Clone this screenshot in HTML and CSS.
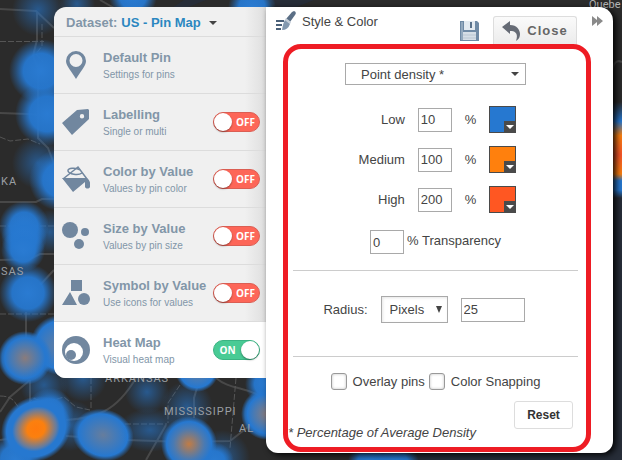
FILE: index.html
```
<!DOCTYPE html>
<html lang="en">
<head>
  <meta charset="UTF-8">
  <meta name="viewport" content="width=device-width, initial-scale=1.0">
  <title>Pin Map - Style &amp; Color</title>
  <link rel="stylesheet" href="styles.css">
</head>
<body>
  <!-- Map behind the panels -->
  <svg class="map" viewBox="0 0 622 460" preserveAspectRatio="xMinYMin slice" aria-hidden="true">
    <defs>
      <radialGradient id="cool">
        <stop offset="0" stop-color="#2a7bd2"/>
        <stop offset="0.55" stop-color="#2678d0" stop-opacity="0.95"/>
        <stop offset="0.8" stop-color="#2678d0" stop-opacity="0.4"/>
        <stop offset="1" stop-color="#2678d0" stop-opacity="0"/>
      </radialGradient>
      <radialGradient id="faint">
        <stop offset="0" stop-color="#2678d0" stop-opacity="0.6"/>
        <stop offset="1" stop-color="#2678d0" stop-opacity="0"/>
      </radialGradient>
      <radialGradient id="warm">
        <stop offset="0" stop-color="#8a7c7c"/>
        <stop offset="0.5" stop-color="#4a7ab2"/>
        <stop offset="0.75" stop-color="#2678d0"/>
        <stop offset="0.85" stop-color="#2678d0" stop-opacity="0.8"/>
        <stop offset="1" stop-color="#2678d0" stop-opacity="0"/>
      </radialGradient>
      <radialGradient id="mild">
        <stop offset="0" stop-color="#667d9d"/>
        <stop offset="0.8" stop-color="#2678d0"/>
        <stop offset="1" stop-color="#2678d0" stop-opacity="0"/>
      </radialGradient>
      <radialGradient id="brown">
        <stop offset="0" stop-color="#c17c45"/>
        <stop offset="0.55" stop-color="#4a7ab2"/>
        <stop offset="0.8" stop-color="#2678d0"/>
        <stop offset="1" stop-color="#2678d0" stop-opacity="0"/>
      </radialGradient>
      <radialGradient id="hot">
        <stop offset="0" stop-color="#ff7a0c"/>
        <stop offset="0.25" stop-color="#fb800f"/>
        <stop offset="0.58" stop-color="#647ca0"/>
        <stop offset="0.68" stop-color="#2678d0"/>
        <stop offset="0.84" stop-color="#2678d0"/>
        <stop offset="1" stop-color="#2678d0" stop-opacity="0"/>
      </radialGradient>
      <linearGradient id="coast" x1="0" y1="0" x2="0" y2="1">
        <stop offset="0" stop-color="#2678d0" stop-opacity="0"/>
        <stop offset="0.2" stop-color="#2678d0"/>
        <stop offset="0.35" stop-color="#fb800f"/>
        <stop offset="0.55" stop-color="#f8562a"/>
        <stop offset="0.75" stop-color="#fb800f"/>
        <stop offset="0.82" stop-color="#2678d0"/>
        <stop offset="0.92" stop-color="#2678d0"/>
        <stop offset="1" stop-color="#2678d0" stop-opacity="0"/>
      </linearGradient>
    </defs>

    <rect width="622" height="460" fill="#2b2b2b"/>
    <path d="M270 0h44l-20 8h-18zM184 0h22l-20 8h-14zM600 192h22v268H360l80-8h160z" fill="#272d38"/>

    <g class="roads">
      <path d="M0 9l36 2 18 17M0 113l28 1 12 1M0 202h36l6-3h12M0 260l30-1 10-5h14M37 12v28l-4 16 5 12v70l10 10 6 16M26 312v36M30 380v28M0 412l10-15 20-17M0 440l30-4M54 270l-14 15"/>
      <path d="M66 420c30-2 50-8 70-42M66 436l60 4 60 2 44-1 36-28M200 378l-6 20 0 20M216 378c14 12 30 8 50 21M100 0l14 8M166 425l-20 35M622 62q-8-4-10 10"/>
    </g>
    <g class="borders">
      <path d="M0 41.500h44M42 24v22l-6 8 7 8M0 226h54M0 314h54M0 137l10 4 18-2 12 5M0 396q12 0 16 8t18-6q8 6 30-1l12 10 14 3M91 378v30M125 424h42M236 378l-6 70M180 385l-12 18v20"/>
    </g>

    <g>
      <circle cx="38" cy="10" r="26" fill="url(#faint)"/>
      <circle cx="133" cy="-4" r="24" fill="url(#cool)"/>
      <circle cx="77" cy="4" r="18" fill="url(#faint)"/>
      <circle cx="252" cy="8" r="24" fill="url(#cool)"/>
      <circle cx="41" cy="71" r="32" fill="url(#cool)"/>
      <circle cx="47" cy="114" r="32" fill="url(#cool)"/>
      <circle cx="38" cy="163" r="26" fill="url(#faint)"/>
      <circle cx="60" cy="180" r="31" fill="url(#cool)"/>
      <circle cx="50" cy="232" r="22" fill="url(#faint)"/>
      <circle cx="24" cy="226" r="25" fill="url(#cool)"/>
      <circle cx="24" cy="238" r="23" fill="url(#cool)"/>
      <circle cx="23" cy="250" r="22" fill="url(#cool)"/>
      <circle cx="28" cy="293" r="29" fill="url(#cool)"/>
      <circle cx="60" cy="345" r="30" fill="url(#mild)"/>
      <circle cx="25" cy="358" r="27" fill="url(#warm)"/>
      <circle cx="44" cy="385" r="24" fill="url(#faint)"/>
      <circle cx="83" cy="378" r="24" fill="url(#faint)"/>
      <circle cx="70" cy="425" r="26" fill="url(#faint)"/>
      <circle cx="15" cy="460" r="26" fill="url(#cool)"/>
      <circle cx="50" cy="412" r="24" fill="url(#cool)"/>
      <ellipse cx="36" cy="429" rx="36" ry="32" transform="rotate(-30 36 429)" fill="url(#hot)"/>
      <ellipse cx="103" cy="435" rx="31" ry="26" transform="rotate(15 103 435)" fill="url(#mild)"/>
      <circle cx="147" cy="392" r="22" fill="url(#faint)"/>
      <ellipse cx="150" cy="430" rx="32" ry="22" fill="url(#faint)"/>
      <circle cx="187" cy="407" r="26" fill="url(#faint)"/>
      <circle cx="197" cy="370" r="22" fill="url(#mild)"/>
      <circle cx="222" cy="458" r="28" fill="url(#faint)"/>
      <circle cx="214" cy="462" r="20" fill="url(#cool)"/>
      <circle cx="189" cy="444" r="28" fill="url(#brown)"/>
      <circle cx="266" cy="384" r="21" fill="url(#cool)"/>
      <circle cx="267" cy="414" r="26" fill="url(#warm)"/>
      <circle cx="370" cy="462" r="22" fill="url(#cool)"/>
      <circle cx="395" cy="464" r="24" fill="url(#cool)"/>
      <rect x="611" y="102" width="14" height="96" fill="url(#coast)"/>
    </g>

    <g class="places">
      <text x="1" y="185">KA</text>
      <text x="1" y="275">SAS</text>
      <text x="105" y="382">ARKANSAS</text>
      <text x="164" y="415">MISSISSIPPI</text>
      <text x="239" y="432">AL</text>
    </g>
    <text class="city" x="589" y="8">Quebe</text>
  </svg>

  <div class="app">
    <nav class="sidebar">
      <button class="dataset" type="button">
        Dataset: <span>US - Pin Map</span>
        <svg width="8" height="4" viewBox="0 0 8 4"><path d="M0 0h8L4 4z" fill="#444"/></svg>
      </button>

      <div class="layer">
        <svg class="layer-icon" viewBox="0 0 28 28">
          <path fill-rule="evenodd" d="M14 0a10 10 0 0 1 10 10c0 5-6 11-10 18C10 21 4 15 4 10A10 10 0 0 1 14 0zm0 3a6.500 6.500 0 1 0 0 13 6.500 6.500 0 0 0 0-13z"/>
        </svg>
        <div class="layer-text">
          <h3>Default Pin</h3>
          <p>Settings for pins</p>
        </div>
      </div>

      <div class="layer">
        <svg class="layer-icon" viewBox="0 0 28 28">
          <path fill-rule="evenodd" d="M0 15L15 2l11-1 1 1v9L10 27zM20 6a2.200 2.200 0 1 0 0 4.400A2.200 2.200 0 0 0 20 6z"/>
        </svg>
        <div class="layer-text">
          <h3>Labelling</h3>
          <p>Single or multi</p>
        </div>
        <label class="switch"><input type="checkbox" aria-label="Labelling"><span>OFF</span></label>
      </div>

      <div class="layer">
        <svg class="layer-icon" viewBox="0 0 28 28">
          <path d="M1 14L16 2l9 12" fill="none" stroke="#71879f" stroke-width="1.500"/>
          <path d="M20 8c-4 3-13 1-14-2s8-4 12-1" fill="none" stroke="#71879f" stroke-width="1.500"/>
          <path d="M0 13h25c3 2 4 7 3 9s-4 2-5 0v-5L11 27z"/>
        </svg>
        <div class="layer-text">
          <h3>Color by Value</h3>
          <p>Values by pin color</p>
        </div>
        <label class="switch"><input type="checkbox" aria-label="Color by Value"><span>OFF</span></label>
      </div>

      <div class="layer">
        <svg class="layer-icon" viewBox="0 0 28 28">
          <circle cx="8" cy="8" r="8"/>
          <circle cx="23" cy="10" r="4"/>
          <circle cx="17" cy="22" r="5"/>
        </svg>
        <div class="layer-text">
          <h3>Size by Value</h3>
          <p>Values by pin size</p>
        </div>
        <label class="switch"><input type="checkbox" aria-label="Size by Value"><span>OFF</span></label>
      </div>

      <div class="layer">
        <svg class="layer-icon" viewBox="0 0 28 28">
          <path d="M9 1h11v11H9zM0 26l8-13 7 13z"/>
          <circle cx="22" cy="20" r="6"/>
        </svg>
        <div class="layer-text">
          <h3>Symbol by Value</h3>
          <p>Use icons for values</p>
        </div>
        <label class="switch"><input type="checkbox" aria-label="Symbol by Value"><span>OFF</span></label>
      </div>

      <div class="layer active">
        <svg class="layer-icon" viewBox="0 0 28 28">
          <circle cx="14" cy="14" r="14"/>
          <circle cx="12" cy="16" r="9" fill="#fff"/>
          <circle cx="9" cy="19" r="5"/>
        </svg>
        <div class="layer-text">
          <h3>Heat Map</h3>
          <p>Visual heat map</p>
        </div>
        <label class="switch"><input type="checkbox" aria-label="Heat Map" checked><span>ON</span></label>
      </div>
    </nav>

    <main class="panel">
      <header class="panel-header">
        <svg class="brush" width="20" height="20" viewBox="0 0 20 20">
          <path d="M0 10h8M0 14h6M0 18h5" stroke="#4a6078" stroke-width="2"/>
          <path d="M18 0q3 1 1 4l-5 7-4-3 6-7z" fill="#5b6f86"/>
          <path d="M10 7l5 4-1 2-5-4z" fill="#c3ccd6"/>
          <path d="M9 9l5 4q-2 6-8 6 1-7 3-10z" fill="#8398ae"/>
        </svg>
        <h2>Style &amp; Color</h2>
        <button class="icon-button save" type="button" aria-label="Save">
          <svg width="19" height="21" viewBox="0 0 19 21">
            <path d="M0 1h17l2 2v18H0z" fill="#6f8aa5"/>
            <path d="M1 2h2v18H1z" fill="#93a9be"/>
            <path d="M4 1h11v9H4z" fill="#e4ebf1"/>
            <path d="M10 2h2v6h-2z" fill="#5a728b"/>
            <path d="M3 12h13v8H3z" fill="#d5dee6"/>
            <path d="M3 15h13M3 18h13" stroke="#b9c6d2"/>
          </svg>
        </button>
        <button class="close" type="button">
          <svg width="18" height="20" viewBox="0 0 18 20">
            <path d="M0 6l8-6v4c7 0 10 5 10 9 0 3-1 5-4 7 2-6 1-10-6-10v3z" fill="#666b75"/>
          </svg>
          Close
        </button>
        <button class="icon-button collapse" type="button" aria-label="Collapse">
          <svg width="11" height="10" viewBox="0 0 11 10"><path d="M0 0l5 4V0l6 5-6 5V6l-5 4z" fill="#8a8a8a"/></svg>
        </button>
      </header>

      <form class="settings">
        <div class="fields">
          <div class="select density">
            <select aria-label="Heat map type">
              <option>Point density *</option>
            </select>
          </div>

          <div class="levels">
            <label for="low">Low</label>
            <input type="text" id="low" value="10">
            <span>%</span>
            <button class="swatch low" type="button" aria-label="Low color"></button>

            <label for="medium">Medium</label>
            <input type="text" id="medium" value="100">
            <span>%</span>
            <button class="swatch medium" type="button" aria-label="Medium color"></button>

            <label for="high">High</label>
            <input type="text" id="high" value="200">
            <span>%</span>
            <button class="swatch high" type="button" aria-label="High color"></button>
          </div>

          <div class="transparency">
            <input type="text" id="transparency" value="0">
            <label for="transparency">% Transparency</label>
          </div>

          <div class="radius">
            <label for="radius">Radius:</label>
            <div class="select unit">
              <select aria-label="Radius unit">
                <option>Pixels</option>
              </select>
            </div>
            <input type="text" id="radius" value="25">
          </div>

          <div class="checks">
            <label><input type="checkbox">Overlay pins</label>
            <label><input type="checkbox">Color Snapping</label>
          </div>
        </div>

        <footer class="settings-footer">
          <p>* Percentage of Average Density</p>
          <button class="reset" type="reset">Reset</button>
        </footer>
      </form>
    </main>
  </div>
</body>
</html>
```
FILE: styles.css
```
* {
  margin: 0;
  padding: 0;
  box-sizing: border-box;
}

body {
  position: relative;
  min-height: 100vh;
  overflow: hidden;
  background: #2b2b2b;
  font-family: "Liberation Sans", Arial, sans-serif;
  font-size: 13px;
  color: #444;
}

button,
input,
select {
  font: inherit;
  color: inherit;
}

button {
  cursor: pointer;
}

/* Map */
.map {
  position: absolute;
  top: 0;
  left: 0;
  width: 100%;
  height: 100%;
}

.roads path {
  fill: none;
  stroke: #484848;
  stroke-width: 2;
}

.borders path {
  fill: none;
  stroke: #555;
  stroke-width: 1;
  stroke-dasharray: 6 2;
}

.places {
  font-family: Roboto, sans-serif;
  font-size: 11px;
  letter-spacing: 1px;
  fill: #9a9fa4;
}

.city {
  font-family: Roboto, sans-serif;
  font-size: 11px;
  fill: #b5b5b5;
}

/* Layout */
.app {
  position: relative;
  display: flex;
  align-items: flex-start;
  padding: 7px 9px 7px 54px;
}

/* Sidebar */
.sidebar {
  width: 212px;
  flex-shrink: 0;
  background: linear-gradient(to right, #f0f0f0 90%, #dedede);
  border-radius: 12px 0 0 12px;
  overflow: hidden;
}

.dataset {
  display: flex;
  align-items: center;
  width: 100%;
  height: 29px;
  padding: 2px 12px 0;
  border: none;
  background: none;
  font-weight: bold;
  color: #8296a8;
}

.dataset span {
  margin: 0 8px 0 4px;
  color: #2b87c0;
}

.layer {
  display: flex;
  align-items: center;
  height: 57px;
  padding: 0 6px 0 8px;
  border-top: 1px solid #dcdcdc;
}

.layer.active {
  background: white;
}

.layer-icon {
  width: 28px;
  height: 28px;
  margin-right: 13px;
  flex-shrink: 0;
  fill: #71879f;
}

.layer-text {
  flex: 1;
  padding-top: 2px;
  white-space: nowrap;
  color: #8296a8;
}

.layer-text h3 {
  font-size: 13px;
  line-height: 17px;
}

.layer-text p {
  font-size: 10px;
  line-height: 17px;
}

.switch {
  display: flex;
  align-items: center;
  width: 47px;
  height: 20px;
  flex-shrink: 0;
  border: 1px solid #db5e53;
  border-radius: 10px;
  background: #fd6658;
  cursor: pointer;
}

.switch input {
  appearance: none;
  width: 18px;
  height: 18px;
  border-radius: 50%;
  background: white;
  box-shadow: 0 1px 2px rgba(0, 0, 0, 0.4);
}

.switch span {
  flex: 1;
  text-align: center;
  font-family: "Open Sans", sans-serif;
  font-size: 10px;
  font-weight: bold;
  color: white;
}

.active .switch {
  flex-direction: row-reverse;
  border-color: #3bb383;
  background: #49cb95;
}

/* Settings panel */
.panel {
  flex: 1;
  min-width: 0;
  padding: 0 0 1px;
  background: white;
  border-radius: 0 14px 12px 12px;
  box-shadow: 3px 2px 6px rgba(0, 0, 0, 0.9);
}

.panel-header {
  display: flex;
  align-items: flex-start;
  height: 37px;
  padding: 0 10px;
}

.brush {
  margin-top: 4px;
}

.panel-header h2 {
  flex: 1;
  margin-left: 6px;
  font-size: 13px;
  font-weight: normal;
  line-height: 30px;
}

.icon-button {
  display: flex;
  border: none;
  background: none;
}

.save {
  margin-top: 13px;
}

.close {
  display: flex;
  align-items: center;
  justify-content: center;
  gap: 7px;
  width: 84px;
  height: 28px;
  margin: 9px 15px 0 14px;
  border: 1px solid #ddd;
  border-bottom: none;
  border-radius: 3px 3px 0 0;
  background: linear-gradient(#fafafa, #ececec);
  font-weight: bold;
  letter-spacing: 1px;
  color: #666;
}

.collapse {
  margin-top: 9px;
}

.settings {
  margin: 0 22px 0 17px;
  padding: 14px 0 6px;
  border: 5px solid #ee1c24;
  border-radius: 18px;
}

.fields {
  padding: 0 8px 0 5px;
}

.fields input[type="text"] {
  width: 34px;
  height: 24px;
  padding: 0 2px;
  border: 1px solid #a9a9a9;
  background: white;
}

.select {
  position: relative;
}

.select select {
  appearance: none;
  width: 100%;
  height: 100%;
  padding: 0 15px;
  border: 1px solid #a9a9a9;
  border-radius: 0;
  background: white;
}

.select::after {
  content: '';
  position: absolute;
  top: 50%;
  right: 7px;
  margin-top: -2px;
  border: 4px solid transparent;
  border-top-color: #444;
  border-bottom: none;
  pointer-events: none;
}

.density {
  width: 181px;
  height: 22px;
  margin: 0 auto 21px;
}

.levels {
  display: grid;
  grid-template-columns: repeat(4, auto);
  justify-content: center;
  align-items: center;
  gap: 13px;
  padding-left: 4px;
}

.levels label {
  text-align: right;
}

.swatch {
  position: relative;
  width: 27px;
  height: 27px;
  border: 1px solid #4a4a4a;
}

.swatch::before {
  content: '';
  position: absolute;
  right: 0;
  bottom: 0;
  width: 11px;
  height: 11px;
  background: #4a4a4a;
}

.swatch::after {
  content: '';
  position: absolute;
  right: 1px;
  bottom: 3px;
  border: 4px solid transparent;
  border-top-color: white;
  border-bottom: none;
}

.swatch.low {
  background: #2678d0;
}

.swatch.medium {
  background: #ff800d;
}

.swatch.high {
  background: #ff5722;
}

.transparency {
  display: flex;
  justify-content: center;
  gap: 3px;
  padding: 17px 0 16px;
  line-height: 22px;
}

.radius {
  display: flex;
  align-items: center;
  justify-content: center;
  gap: 13px;
  padding: 25px 23px 33px 0;
  border: 1px solid #ccc;
  border-width: 1px 0;
}

.fields .radius input {
  width: 64px;
}

.unit {
  width: 67px;
  height: 27px;
}

.unit select {
  padding: 0 8px;
  box-shadow: inset 1px 1px 3px rgba(0, 0, 0, 0.1);
}

.unit::after {
  right: 6px;
  margin-top: -4px;
  border-width: 7px 3px 0;
}

.checks {
  display: flex;
  justify-content: center;
  gap: 4px;
  padding: 16px 0 11px;
}

.checks label {
  display: flex;
  align-items: center;
  gap: 6px;
}

.checks input {
  appearance: none;
  width: 16px;
  height: 17px;
  border: 1px solid #999;
  border-radius: 3px;
  background: white;
  box-shadow: inset 0 0 3px rgba(0, 0, 0, 0.25);
}

.settings-footer {
  display: flex;
  align-items: flex-start;
  justify-content: space-between;
  min-height: 40px;
  padding-right: 13px;
}

.settings-footer p {
  align-self: flex-end;
  font-style: italic;
  line-height: 16px;
}

.reset {
  width: 59px;
  height: 28px;
  border: 1px solid #ddd;
  border-radius: 3px;
  background: white;
  font-size: 12px;
  font-weight: bold;
  color: #333;
}
```
